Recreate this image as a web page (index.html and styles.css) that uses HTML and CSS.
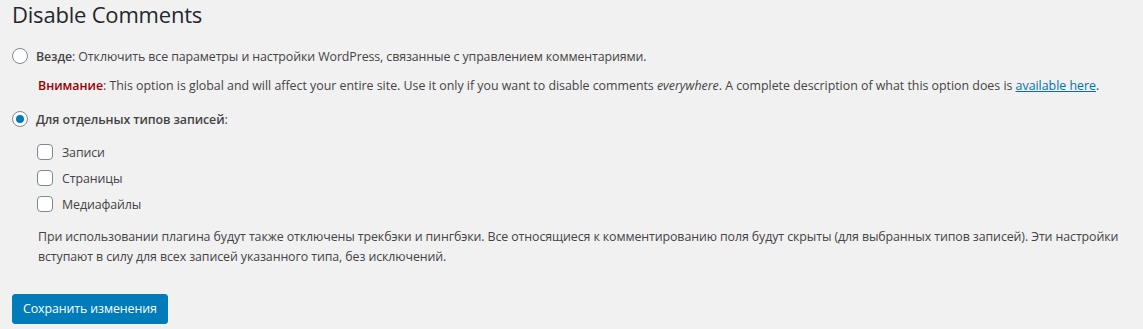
FILE: index.html
```html
<!DOCTYPE html>
<html lang="ru">
<head>
<meta charset="utf-8">
<title>Disable Comments</title>
<link rel="stylesheet" href="styles.css">
</head>
<body>
<div class="wrap">
  <h1 class="title">Disable Comments</h1>
  <ul class="modes">
    <li class="mode">
      <label class="choice">
        <span class="radio"></span>
        <span class="text"><strong>Везде</strong>: Отключить все параметры и настройки WordPress, связанные с управлением комментариями.</span>
      </label>
      <p class="note"><span class="warn">Внимание</span>: This option is global and will affect your entire site. Use it only if you want to disable comments <em>everywhere</em>. A complete description of what this option does is <a href="#">available here</a>.</p>
    </li>
    <li class="mode">
      <label class="choice">
        <span class="radio checked"></span>
        <span class="text"><strong>Для отдельных типов записей</strong>:</span>
      </label>
      <ul class="types">
        <li class="type"><span class="checkbox"></span><span class="text">Записи</span></li>
        <li class="type"><span class="checkbox"></span><span class="text">Страницы</span></li>
        <li class="type"><span class="checkbox"></span><span class="text">Медиафайлы</span></li>
      </ul>
      <p class="desc">При использовании плагина будут также отключены трекбэки и пингбэки. Все относящиеся к комментированию поля будут скрыты (для выбранных типов записей). Эти настройки<br>вступают в силу для всех записей указанного типа, без исключений.</p>
    </li>
  </ul>
  <p class="submit"><button class="button-primary" type="button">Сохранить изменения</button></p>
</div>
</body>
</html>
```

FILE: styles.css
```css
html, body {
  margin: 0;
  padding: 0;
  background: #f1f1f1;
}
body {
  font-family: "Open Sans", "Noto Sans", sans-serif;
  font-size: 12.4px;
  letter-spacing: -0.1px;
  color: #444;
  height: 329px;
  overflow: hidden;
}
.wrap {
  padding: 0 12px;
}
.title {
  margin: 0;
  font-size: 22px;
  letter-spacing: -0.2px;
  font-weight: 400;
  line-height: 29px;
  color: #23282d;
}
.modes, .types {
  list-style: none;
  margin: 0;
  padding: 0;
}
.modes {
  margin-top: 17px;
}
.mode + .mode {
  margin-top: 13px;
}
.choice {
  display: flex;
  align-items: center;
  height: 20px;
  white-space: nowrap;
}
.choice .text {
  margin-left: 8px;
}
strong {
  font-weight: 600;
}
.radio {
  box-sizing: border-box;
  width: 16px;
  height: 16px;
  border: 1px solid #7e8993;
  border-radius: 50%;
  background: #fff;
  display: flex;
  align-items: center;
  justify-content: center;
  flex: none;
}
.radio.checked::before {
  content: "";
  width: 8px;
  height: 8px;
  border-radius: 50%;
  background: #007cba;
}
.note {
  margin: 10px 0 0 26px;
  line-height: 20px;
  letter-spacing: -0.015px;
  white-space: nowrap;
}
.warn {
  color: #900;
  font-weight: 600;
}
.note a {
  color: #0073aa;
  text-decoration: underline;
}
.types {
  margin: 10px 0 0 25px;
}
.type {
  display: flex;
  align-items: center;
  height: 26px;
}
.checkbox {
  box-sizing: border-box;
  width: 16px;
  height: 16px;
  border: 1px solid #7e8993;
  border-radius: 4px;
  background: #fff;
  flex: none;
}
.type .text {
  margin-left: 9px;
}
.desc {
  margin: 10px 0 0 26px;
  line-height: 19.5px;
  white-space: nowrap;
}
.submit {
  margin: 28px 0 0;
}
.button-primary {
  box-sizing: border-box;
  height: 30px;
  padding: 0 10px;
  min-width: 154px;
  border: 1px solid #007cba;
  border-radius: 3px;
  background: #007cba;
  color: #fff;
  font-family: inherit;
  font-size: 12.4px;
  letter-spacing: -0.1px;
  line-height: 28px;
  cursor: pointer;
}
```
